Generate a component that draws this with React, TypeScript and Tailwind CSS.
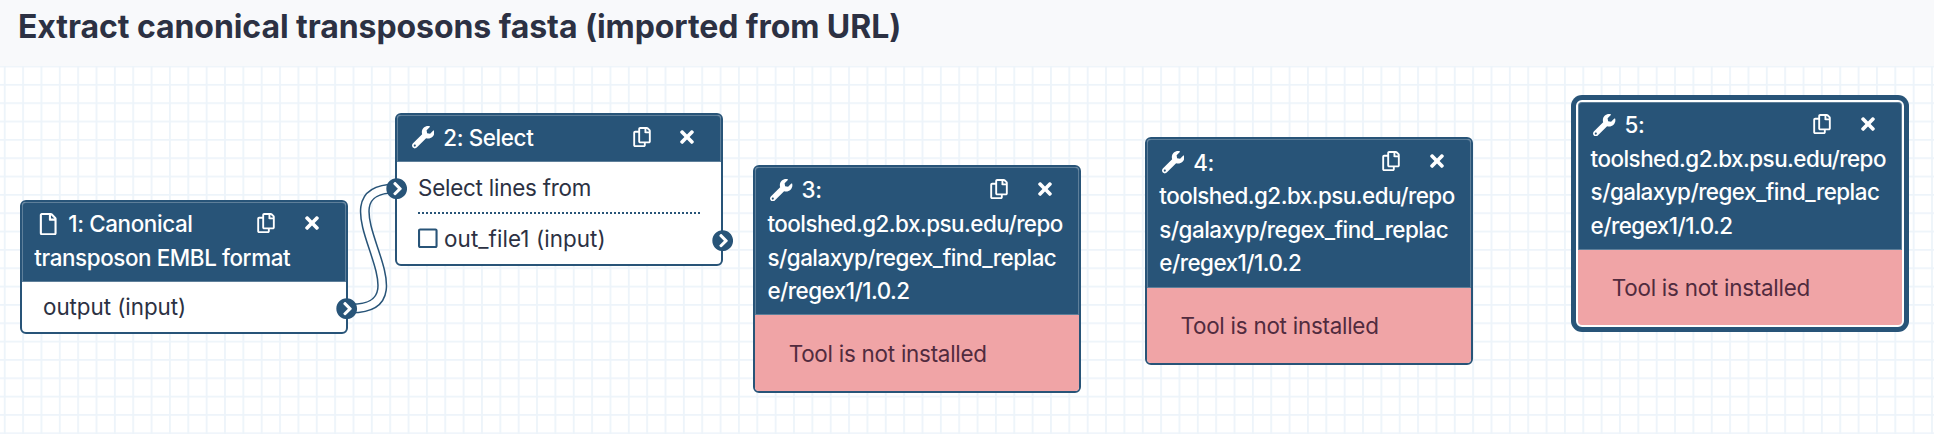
import React from "react";
import { FaWrench, FaRegCopy, FaTimes, FaRegFile, FaRegSquare, FaChevronCircleRight } from "react-icons/fa";

const LINK = "M351 242.5C436 242.5 311 122.5 396 122.5";

function Header({ icon, label, lines = [], className = "" }: { icon: React.ReactNode; label: string; lines?: string[]; className?: string }) {
  return (
    <div className={"rounded-t-[4px] bg-[#285478] pl-[12.3px] text-[22.4px] leading-[33.6px] font-[450] text-white shadow-[inset_0_0_0_1px_rgba(255,255,255,0.25)] " + className}>
      <div className="flex h-[33.6px] items-center">
        <span className="flex w-7 justify-center">{icon}</span>
        <span className="ml-[6px] tracking-[-0.38px] whitespace-pre">{label}</span>
        <span className="mr-[27px] mb-[2px] ml-auto flex items-center gap-[28.5px] text-[20px]">
          <FaRegCopy />
          <FaTimes className="w-[14px]" />
        </span>
      </div>
      {lines.map((l) => (
        <div key={l} className={"whitespace-nowrap " + (lines.length > 1 ? "tracking-[-0.52px]" : "tracking-[-0.4px]")}>
          {l}
        </div>
      ))}
    </div>
  );
}

function Terminal({ className }: { className: string }) {
  return (
    <span className={"absolute flex size-[21.4px] items-center justify-center " + className}>
      <span className="absolute size-[16px] rounded-full bg-white" />
      <FaChevronCircleRight className="relative size-full text-[#285478]" />
    </span>
  );
}

const PATH = ["toolshed.g2.bx.psu.edu/repo", "s/galaxyp/regex_find_replac", "e/regex1/1.0.2"];

function MissingTool({ step, className }: { step: string; className: string }) {
  return (
    <div className={"absolute flex h-[227.7px] w-[327.7px] flex-col rounded-[6px] border-2 " + className}>
      <Header icon={<FaWrench />} label={step} lines={PATH} className="pt-[6.4px] pb-[7.6px]" />
      <div className="flex-1 rounded-b-[4px] bg-[#f0a4a6] pt-[21.3px] pl-[33.5px] text-[22.4px] leading-[33.6px] tracking-[-0.24px] text-[#512b3e]">
        Tool is not installed
      </div>
    </div>
  );
}

export default function App() {
  return (
    <div className="flex h-[434px] w-[1934px] flex-col overflow-hidden bg-[#f8f9fb] font-['Inter',sans-serif] text-[#2c3143]">
      <h1 className="h-[66px] pt-[3px] pl-[18px] text-[32px] leading-[48px] font-bold tracking-[-0.07px] whitespace-nowrap">
        Extract canonical transposons fasta (imported from URL)
      </h1>
      <div className="relative flex-1 bg-white">
        <svg className="absolute inset-0" width="1934" height="368">
          <defs>
            <pattern id="grid" x="3.8" y="-0.4" width="18.355" height="18.34" patternUnits="userSpaceOnUse">
              <path d="M0 0.9H18.355M0.9 0V18.34" stroke="#edf4fa" strokeWidth="1.8" />
            </pattern>
          </defs>
          <rect width="1934" height="368" fill="url(#grid)" />
        </svg>

        <div className="absolute top-[134px] left-[20px] h-[133.7px] w-[327.7px] rounded-[6px] border-2 border-[#285478] bg-white">
          <Header icon={<FaRegFile />} label="1: Canonical" lines={["transposon EMBL format"]} className="pt-[5px] pb-[7.8px]" />
          <div className="pt-[7.8px] pl-[21px] text-[22.4px] leading-[33.6px] tracking-[-0.05px]">output (input)</div>
        </div>

        <div className="absolute top-[46.7px] left-[395px] h-[153px] w-[328px] rounded-[6px] border-2 border-[#285478] bg-white">
          <Header icon={<FaWrench />} label="2: Select" className="pt-[6.2px] pb-[7.8px]" />
          <div className="mx-[21px] pt-[8.8px] text-[22.4px] leading-[33.6px]">
            <div className="h-[43.4px] border-b-2 border-dotted border-[#285478] tracking-[-0.22px]">Select lines from</div>
            <div className="flex items-center pt-[7.2px]">
              <FaRegSquare className="w-[19.6px] text-[#285478]" />
              <span className="ml-[6.5px] tracking-[0.08px]">out_file1 (input)</span>
            </div>
          </div>
        </div>

        <MissingTool step="3:" className="top-[99px] left-[753.2px] border-[#285478]" />
        <MissingTool step="4:" className="top-[71.3px] left-[1145px] border-[#285478]" />
        <MissingTool step="5:" className="top-[33.6px] left-[1576.3px] border-white bg-white shadow-[0_0_0_5px_#285478]" />

        <svg className="absolute inset-0" width="1934" height="368" fill="none">
          <path d={LINK} stroke="#285478" strokeWidth="10" />
          <path d={LINK} stroke="#fff" strokeWidth="7" />
        </svg>
        <Terminal className="top-[231.8px] left-[336.3px]" />
        <Terminal className="top-[111.8px] left-[385.5px]" />
        <Terminal className="top-[163.6px] left-[712px]" />
      </div>
    </div>
  );
}
